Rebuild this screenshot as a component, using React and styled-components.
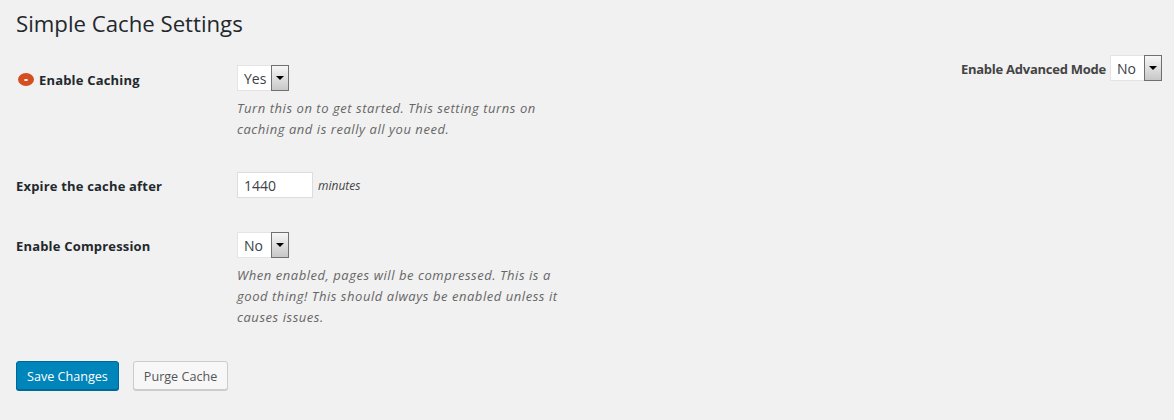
import styled, { createGlobalStyle } from "styled-components";

const GlobalStyle = createGlobalStyle`
  html, body {
    margin: 0;
    padding: 0;
    background: #f1f1f1;
    color: #23282d;
    font-family: "Open Sans", "Noto Sans", sans-serif;
    font-size: 13px;
  }
`;

const Page = styled.div`
  width: 1174px;
  height: 420px;
  box-sizing: border-box;
  padding: 9px 12px 0 16px;
  overflow: hidden;
`;

const Title = styled.h1`
  margin: 0;
  font-size: 22.2px;
  font-weight: 400;
  line-height: 29px;
  height: 41px;
`;

const Columns = styled.div`
  display: flex;
  justify-content: space-between;
  align-items: flex-start;
`;

const Form = styled.form`
  width: 560px;
`;

const Row = styled.div`
  display: grid;
  grid-template-columns: 221px 1fr;
  padding-top: ${(props) => props.$top}px;
`;

const Label = styled.label`
  display: flex;
  align-items: center;
  gap: 5px;
  height: 26px;
  box-sizing: border-box;
  padding-top: ${(props) => (props.$withIcon ? 3 : 1)}px;
  font-size: 13px;
  font-weight: 700;
  letter-spacing: 0.18px;
  color: #23282d;
`;

const StatusDot = styled.span`
  display: inline-flex;
  align-items: center;
  justify-content: center;
  width: 16px;
  height: 13px;
  margin-left: 2px;
  border-radius: 50%;
  background: #d54e21;

  &::after {
    content: "";
    width: 4px;
    height: 2px;
    border-radius: 50%;
    background: #fff;
  }
`;

const FakeSelect = styled.div`
  display: flex;
  width: max-content;
  height: 26px;
  background: #fff;
  box-shadow: inset 0 0 0 1px #e4e4e4;
`;

const SelectValue = styled.span`
  display: flex;
  align-items: center;
  width: ${(props) => props.$width}px;
  padding-left: 7px;
  box-sizing: border-box;
  font-size: 14px;
  color: #3d4247;
`;

const SelectArrow = styled.span`
  display: flex;
  align-items: center;
  justify-content: center;
  width: 18px;
  height: 26px;
  box-sizing: border-box;
  padding-bottom: 1px;
  border: 1px solid #707070;
  background: linear-gradient(#f6f6f6, #c8c8c8);

  &::after {
    content: "";
    border-left: 4px solid transparent;
    border-right: 4px solid transparent;
    border-top: 4px solid #000;
  }
`;

const Description = styled.p`
  margin: 6.5px 0 0;
  width: 330px;
  font-size: 13px;
  font-style: italic;
  line-height: 21.25px;
  color: #666;
  letter-spacing: 0.55px;
`;

const InlineField = styled.div`
  display: flex;
  align-items: center;
  gap: 5px;
`;

const NumberInput = styled.input`
  width: 76px;
  height: 26px;
  box-sizing: border-box;
  padding: 0 6px;
  border: 1px solid #ddd;
  background: #fff;
  font-family: inherit;
  font-size: 14px;
  color: #3d4247;
  outline: none;
`;

const Unit = styled.span`
  font-size: 12px;
  font-style: italic;
  color: #444;
`;

const Buttons = styled.div`
  display: flex;
  gap: 14px;
  padding-top: 33px;
`;

const Button = styled.button`
  height: 29px;
  box-sizing: border-box;
  padding: 2px 10px 0;
  border: 1px solid ${(props) => (props.$primary ? "#006799" : "#ccc")};
  border-radius: 3px;
  background: ${(props) => (props.$primary ? "#0085ba" : "#f7f7f7")};
  color: ${(props) => (props.$primary ? "#fff" : "#555")};
  box-shadow: 0 1px 0 ${(props) => (props.$primary ? "#006799" : "#ccc")};
  font-family: inherit;
  font-size: 12.6px;
`;

const AdvancedToggle = styled.div`
  display: flex;
  align-items: center;
  gap: 4px;
  padding-top: 5px;
`;

const AdvancedLabel = styled.span`
  padding-top: 2px;
  font-size: 13px;
  font-weight: 700;
  letter-spacing: -0.25px;
  color: #444;
`;

export default function App() {
  return (
    <Page>
      <GlobalStyle />
      <Title>Simple Cache Settings</Title>
      <Columns>
        <Form>
          <Row $top={15}>
            <Label $withIcon>
              <StatusDot />
              Enable Caching
            </Label>
            <div>
              <FakeSelect>
                <SelectValue $width={34}>Yes</SelectValue>
                <SelectArrow />
              </FakeSelect>
              <Description>
                Turn this on to get started. This setting turns on caching and
                is really all you need.
              </Description>
            </div>
          </Row>
          <Row $top={32}>
            <Label>Expire the cache after</Label>
            <InlineField>
              <NumberInput defaultValue="1440" />
              <Unit>minutes</Unit>
            </InlineField>
          </Row>
          <Row $top={34}>
            <Label>Enable Compression</Label>
            <div>
              <FakeSelect>
                <SelectValue $width={34}>No</SelectValue>
                <SelectArrow />
              </FakeSelect>
              <Description>
                When enabled, pages will be compressed. This is a good thing!
                This should always be enabled unless it causes issues.
              </Description>
            </div>
          </Row>
          <Buttons>
            <Button $primary>Save Changes</Button>
            <Button>Purge Cache</Button>
          </Buttons>
        </Form>
        <AdvancedToggle>
          <AdvancedLabel>Enable Advanced Mode</AdvancedLabel>
          <FakeSelect>
            <SelectValue $width={34}>No</SelectValue>
            <SelectArrow />
          </FakeSelect>
        </AdvancedToggle>
      </Columns>
    </Page>
  );
}
